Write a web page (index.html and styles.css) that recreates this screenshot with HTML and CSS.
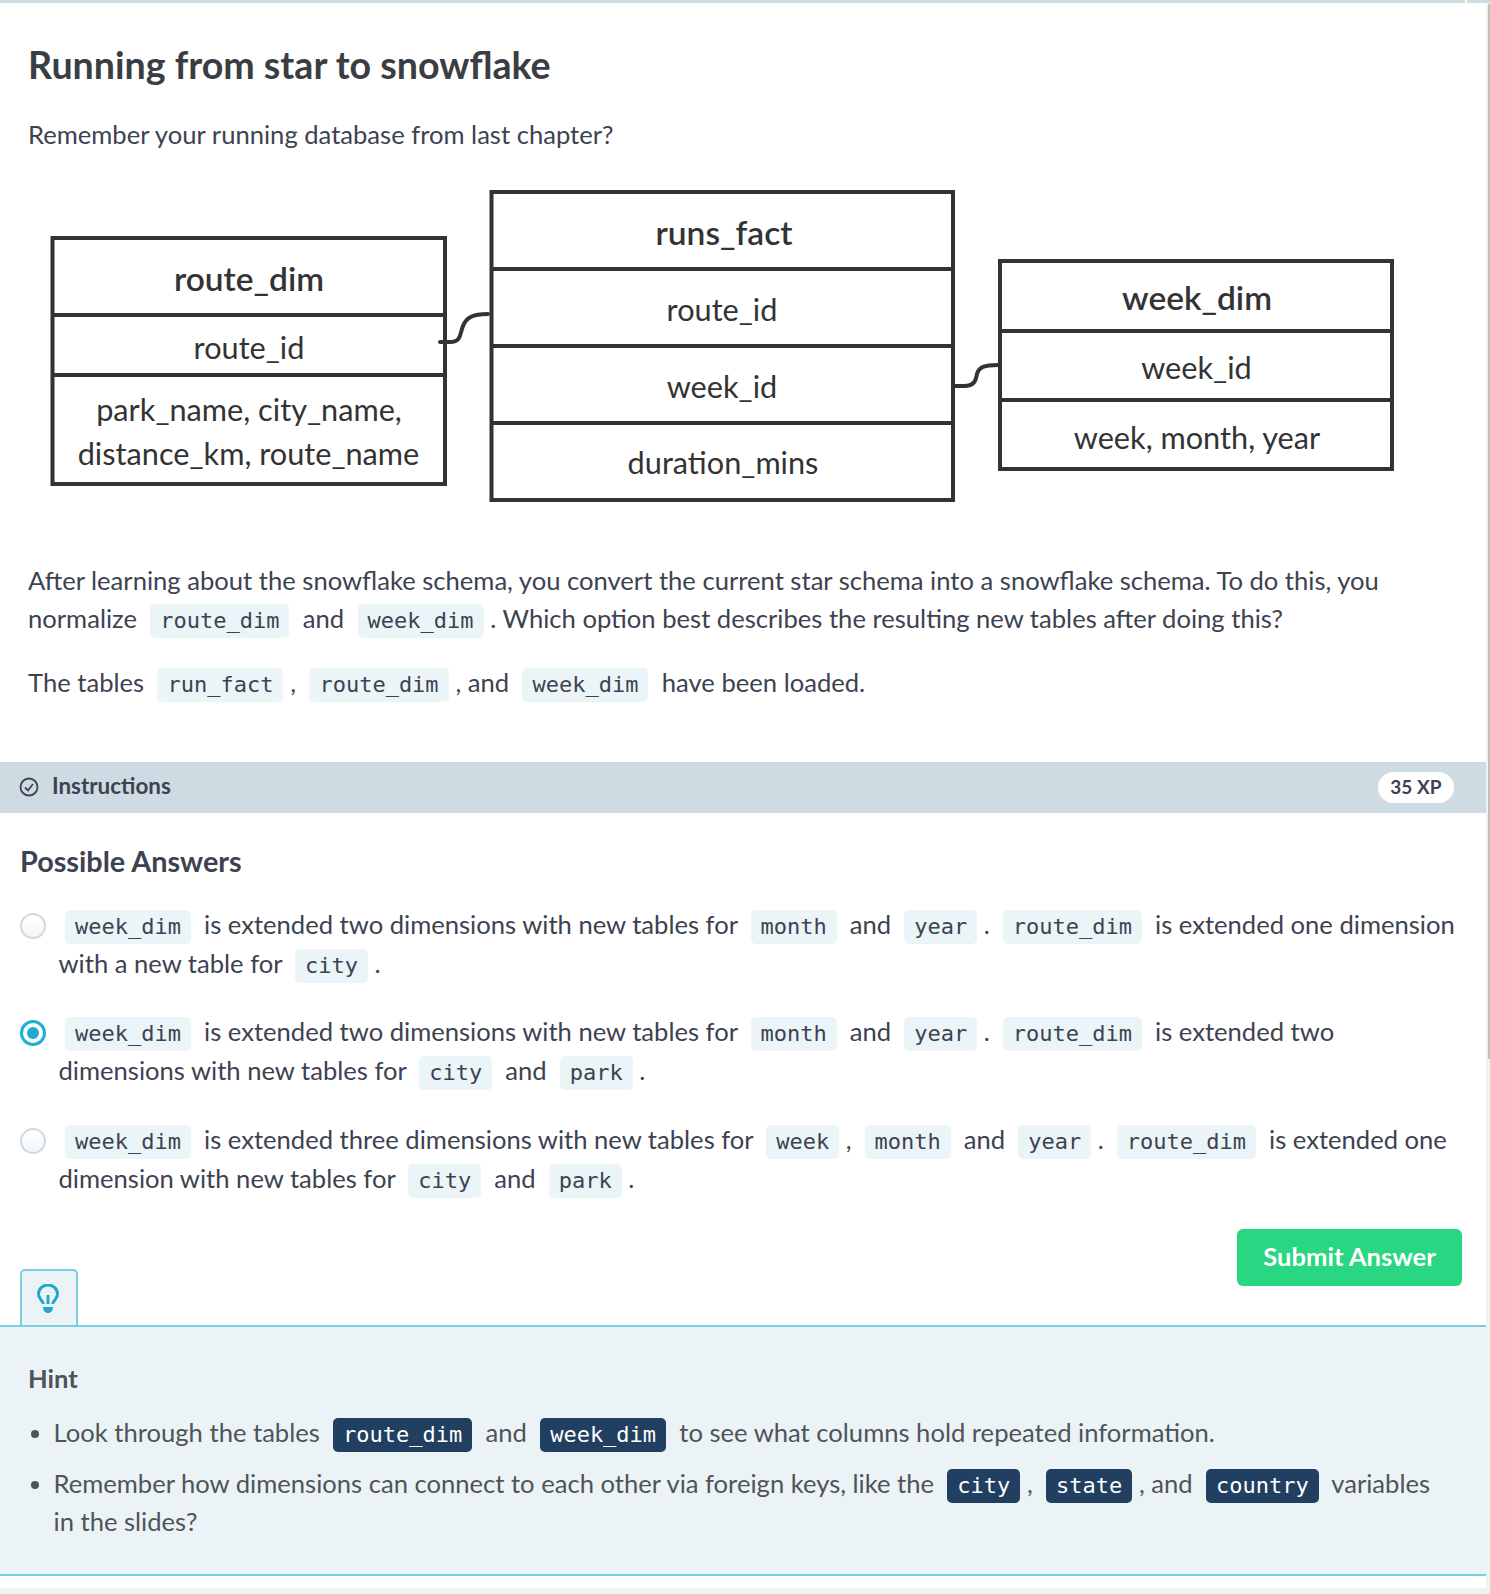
FILE: index.html
```html
<!DOCTYPE html>
<html>
<head>
<title>Running from star to snowflake</title>
<link rel="stylesheet" href="styles.css">
</head>
<body>
<div class="topbar"><span class="topbar-end"></span></div>
<div class="scroll-thumb"></div>
<div class="page">
	<div class="exercise">
		<h1>Running from star to snowflake</h1>
		<p class="intro">Remember your running database from last chapter?</p>
		<svg class="diagram" width="1486" height="330" viewBox="0 180 1486 330">
			<g class="boxes">
				<rect x="52.500" y="238" width="392.500" height="246"/>
				<line x1="52.500" y1="315" x2="445" y2="315"/>
				<line x1="52.500" y1="375" x2="445" y2="375"/>
				<rect x="491.5" y="192" width="461.500" height="308"/>
				<line x1="491.500" y1="269" x2="953" y2="269"/>
				<line x1="491.500" y1="346" x2="953" y2="346"/>
				<line x1="491.500" y1="423" x2="953" y2="423"/>
				<rect x="1000" y="261" width="392" height="208"/>
				<line x1="1000" y1="331" x2="1392" y2="331"/>
				<line x1="1000" y1="400" x2="1392" y2="400"/>
				<path class="link" d="M440 342 H450 C462 342 460 332 463 326 C466 318 472 314 488 314"/>
				<path class="link" d="M953 386 H964 C976 386 976 378 977 374 C979 367 984 365 998 365"/>
			</g>
			<g class="labels">
				<text class="tname" x="249" y="291">route_dim</text>
				<text x="249" y="359">route_id</text>
				<text x="249" y="421">park_name, city_name,</text>
				<text x="248.500" y="465">distance_km, route_name</text>
				<text class="tname" x="724" y="245">runs_fact</text>
				<text x="722" y="321">route_id</text>
				<text x="722" y="398">week_id</text>
				<text x="723" y="474">duration_mins</text>
				<text class="tname" x="1197" y="310">week_dim</text>
				<text x="1196.500" y="379">week_id</text>
				<text x="1197" y="449">week, month, year</text>
			</g>
		</svg>
		<p class="para">After learning about the snowflake schema, you convert the current star schema into a snowflake schema. To do this, you<br>normalize <code>route_dim</code> and <code>week_dim</code>. Which option best describes the resulting new tables after doing this?</p>
		<p class="para second">The tables <code>run_fact</code>, <code>route_dim</code>, and <code>week_dim</code> have been loaded.</p>
	</div>

	<div class="bar">
		<svg class="check" width="20" height="20" viewBox="0 0 20 20"><circle cx="10" cy="10" r="8.500"/><path d="M6 10.500 L9 13.500 L14 7"/></svg>
		<span class="bar-title">Instructions</span>
		<span class="xp">35 XP</span>
	</div>

	<div class="answers">
		<h2>Possible Answers</h2>
		<div class="answer">
			<span class="radio"></span>
			<code>week_dim</code> is extended two dimensions with new tables for <code>month</code> and <code>year</code>. <code>route_dim</code> is extended one dimension<br>with a new table for <code>city</code>.
		</div>
		<div class="answer">
			<span class="radio on"></span>
			<code>week_dim</code> is extended two dimensions with new tables for <code>month</code> and <code>year</code>. <code>route_dim</code> is extended two<br>dimensions with new tables for <code>city</code> and <code>park</code>.
		</div>
		<div class="answer last">
			<span class="radio"></span>
			<code>week_dim</code> is extended three dimensions with new tables for <code>week</code>, <code>month</code> and <code>year</code>. <code>route_dim</code> is extended one<br>dimension with new tables for <code>city</code> and <code>park</code>.
		</div>
		<div class="actions"><button class="submit">Submit Answer</button></div>
	</div>

	<div class="hint-tab">
		<svg width="22" height="29" viewBox="0 0 22 29"><path class="bulb" d="M6.500 20 C5.500 16 1.500 15 1.500 10 A9.500 9 0 0 1 20.500 10 C20.500 15 16.500 16 15.500 20"/><path class="bulb" d="M11 11 V20"/><path class="bulb-base" d="M6 23 H16 C16 26.500 14 29 11 29 C8 29 6 26.500 6 23 Z"/></svg>
	</div>
	<div class="hint">
		<h3>Hint</h3>
		<ul>
			<li>Look through the tables <code>route_dim</code> and <code>week_dim</code> to see what columns hold repeated information.</li>
			<li>Remember how dimensions can connect to each other via foreign keys, like the <code>city</code>, <code>state</code>, and <code>country</code> variables<br>in the slides?</li>
		</ul>
	</div>
	<div class="foot"></div>
</div>
</body>
</html>
```
FILE: styles.css
```css
html, body
{
	margin:0px;
	padding:0px;
	background:#f0f3f4;
}
.topbar
{
	height:3px;
	background:#cfdbe2;
	position:relative;
}
.topbar-end
{
	position:absolute;
	left:1465px;
	top:0px;
	width:2px;
	height:3px;
	background:#ffffff;
}
.scroll-thumb
{
	position:absolute;
	left:1488px;
	top:4px;
	width:2px;
	height:1055px;
	background:#c0c0c0;
}
.page
{
	width:1486px;
	height:1585px;
	background:#ffffff;
	box-sizing:border-box;
	font-family:"Lato", sans-serif;
	font-size:25.6px;
	line-height:38.5px;
	color:#3d4251;
}
code
{
	font-family:"DejaVu Sans Mono", monospace;
	font-size:22px;
	line-height:20px;
	background:#ebf4f7;
	border-radius:5px;
	padding:4px 10px 5px;
	margin:0px 6.500px;
	color:#3d4251;
}
.para code
{
	margin:0px 6.800px;
}
.hint code
{
	margin:0px 6.700px;
}
.exercise
{
	padding:0px 28px;
	height:759px;
}
h1
{
	margin:0px;
	padding-top:39px;
	font-size:37.600px;
	line-height:46px;
	font-weight:700;
	color:#3a3d42;
}
.intro
{
	margin:27px 0px 0px;
}
.diagram
{
	display:block;
	margin:26px 0px 0px -28px;
}
.boxes rect, .boxes line
{
	fill:#ffffff;
	stroke:#333333;
	stroke-width:4;
}
.boxes .link
{
	fill:none;
	stroke:#333333;
	stroke-width:4;
	stroke-linecap:round;
}
.labels text
{
	font-family:"Lato", sans-serif;
	font-size:30.700px;
	fill:#333333;
	text-anchor:middle;
}
.labels .tname
{
	font-size:33.500px;
	font-weight:600;
}
.para
{
	margin:51px 0px 0px;
}
.para.second
{
	margin-top:25px;
}
.bar
{
	display:flex;
	align-items:center;
	height:51px;
	padding:0px 32px 0px 20px;
	background:#cfdbe2;
}
.check
{
	margin:0px 13px 2px -1px;
}
.check circle, .check path
{
	fill:none;
	stroke:#3d4251;
	stroke-width:1.800;
}
.bar-title
{
	font-size:22.400px;
	font-weight:700;
	flex:1;
	margin-bottom:2px;
}
.xp
{
	background:#ffffff;
	border-radius:16px;
	padding:0px 12.500px;
	height:31px;
	line-height:30px;
	font-size:19px;
	font-weight:700;
}
.answers
{
	padding:0px 24px 0px 20px;
}
h2
{
	margin:0px;
	padding-top:30px;
	font-size:28.800px;
	line-height:36px;
	font-weight:700;
}
.answer
{
	position:relative;
	margin-top:26px;
	padding-left:38.500px;
	white-space:nowrap;
}
.answer + .answer
{
	margin-top:30px;
}
.answer.last
{
	margin-top:31px;
}
.radio
{
	position:absolute;
	left:0px;
	top:7.500px;
	width:26px;
	height:26px;
	box-sizing:border-box;
	border:2px #d3d8de solid;
	border-radius:50%;
	background:linear-gradient(#ffffff, #f1f6f9);
}
.radio.on
{
	border:3px #1fb0d3 solid;
	background:#ffffff;
}
.radio.on:after
{
	content:"";
	position:absolute;
	left:4px;
	top:4px;
	width:12px;
	height:12px;
	border-radius:50%;
	background:#1fa9cf;
}
.actions
{
	display:flex;
	justify-content:flex-end;
	margin-top:32px;
}
.submit
{
	width:225px;
	height:57px;
	border:none;
	border-radius:6px;
	background:#29d682;
	color:#ffffff;
	font-family:"Lato", sans-serif;
	font-size:25.600px;
	font-weight:700;
	padding:0px 0px 3px;
}
.hint-tab
{
	width:58px;
	height:57px;
	margin:-17px 0px -1px 20px;
	box-sizing:border-box;
	border:2px #79cfe0 solid;
	border-bottom:none;
	border-radius:5px 5px 0px 0px;
	background:#ebf3f6;
	padding:13px 0px 0px 15px;
}
.hint-tab svg
{
	display:block;
}
.bulb
{
	fill:none;
	stroke:#1fa9cf;
	stroke-width:3;
}
.bulb-base
{
	fill:#1fa9cf;
}
.hint
{
	height:251px;
	box-sizing:border-box;
	background:#ebf3f6;
	border-top:2px #79cfe0 solid;
	border-bottom:2px #79cfe0 solid;
	padding:32px 28px 0px;
	color:#4e5459;
}
h3
{
	margin:0px;
	font-size:25.600px;
	line-height:38px;
	font-weight:700;
}
.hint ul
{
	margin:16px 0px 0px;
	padding:0px 0px 0px 25.500px;
}
.hint li
{
	white-space:nowrap;
	margin-bottom:12px;
}
.hint code
{
	background:#213f60;
	color:#ffffff;
}
.foot
{
	height:12px;
}
```
